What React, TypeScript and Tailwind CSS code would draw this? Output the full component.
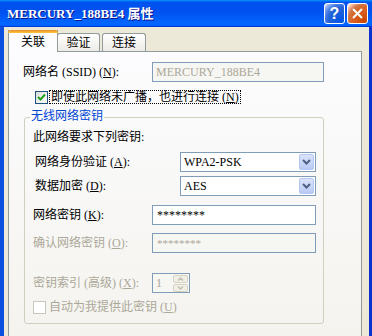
import React from "react";

// Windows XP style "wireless network properties" dialog

function Mn({ c }: { c: string }) {
  return <u className="underline underline-offset-[1px]">{c}</u>;
}

function Chevron({ color }: { color: string }) {
  return (
    <svg width="9" height="6" viewBox="0 0 9 6">
      <path d="M1 1 L4.5 4.5 L8 1" fill="none" stroke={color} strokeWidth="2" />
    </svg>
  );
}

function Select({ value }: { value: string }) {
  return (
    <div className="flex h-[20px] w-[136px] items-center border border-[#7F9DB9] bg-white">
      <span className="flex-1 pl-[3px]">{value}</span>
      <div className="mr-px flex h-[16px] w-[15px] items-center justify-center rounded-[2px] border border-[#B4C7F0] bg-[linear-gradient(180deg,#D9E3FB,#B9CAF3)]">
        <Chevron color="#4D6185" />
      </div>
    </div>
  );
}

function CheckBox({ checked, disabled }: { checked?: boolean; disabled?: boolean }) {
  return (
    <div
      className={
        disabled
          ? "flex h-[13px] w-[13px] items-center justify-center border border-[#CAC8BB] bg-white"
          : "flex h-[13px] w-[13px] items-center justify-center border border-[#1C5180] bg-[linear-gradient(135deg,#DCDCD7,#FFFFFF)]"
      }
    >
      {checked && (
        <svg width="9" height="9" viewBox="0 0 9 9">
          <path d="M1 4 L3.5 6.5 L8 1.5" fill="none" stroke="#21A121" strokeWidth="2" />
        </svg>
      )}
    </div>
  );
}

export default function App() {
  return (
    <div className="h-[336px] w-[372px] overflow-hidden bg-[#ECE9D8] font-[family-name:'Liberation_Serif','Noto_Sans_CJK_SC',serif] text-[12px] leading-[14px] text-black">
      {/* title bar */}
      <div className="flex h-[27px] items-center justify-between bg-[linear-gradient(180deg,#0997ff,#0053ee_8%,#0050ee_40%,#06f_88%,#06f_93%,#005bff_95%,#003dd7_96%,#003dd7)] pl-[7px] pr-[4px]">
        <span className="text-[13px] font-bold text-white [text-shadow:1px_1px_#0F1089]">
          MERCURY_188BE4 属性
        </span>
        <div className="flex gap-[2px]">
          <div className="flex h-[21px] w-[21px] items-center justify-center rounded-[3px] border border-white bg-[radial-gradient(circle_at_90%_90%,#0054E9_0%,#2263D5_55%,#4479E4_70%,#A3BBEC_90%,white_100%)] font-[family-name:'Liberation_Sans',sans-serif] text-[16px] font-bold text-white">
            ?
          </div>
          <div className="flex h-[21px] w-[21px] items-center justify-center rounded-[3px] border border-white bg-[radial-gradient(circle_at_90%_90%,#CC4600_0%,#DC6527_55%,#CD7546_70%,#FFCCB2_90%,white_100%)]">
            <svg width="11" height="11" viewBox="0 0 11 11">
              <path d="M1 1 L10 10 M10 1 L1 10" stroke="white" strokeWidth="2" />
            </svg>
          </div>
        </div>
      </div>

      {/* window body */}
      <div className="h-[309px] border-l-[4px] border-r-[3px] border-l-[#0B4FE0] border-r-[#0A33D0] pt-[3px]">
        {/* tabs */}
        <div className="relative z-10 flex items-end pl-[4px]">
          <div className="flex h-[22px] w-[50px] flex-col border-x border-[#919B9C] bg-[#FCFCFE]">
            <div className="-mx-px h-[3px] rounded-t-[3px] bg-[linear-gradient(180deg,#E68B2C,#FFC73C)]" />
            <div className="flex flex-1 items-center justify-center pb-[2px]">关联</div>
          </div>
          <div className="mb-px -ml-px flex h-[18px] w-[43px] items-center justify-center rounded-t-[3px] border border-b-0 border-[#919B9C] bg-[linear-gradient(180deg,#FFFFFF,#ECEBE6)]">
            验证
          </div>
          <div className="mb-px ml-[2px] flex h-[18px] w-[44px] items-center justify-center rounded-t-[3px] border border-b-0 border-[#919B9C] bg-[linear-gradient(180deg,#FFFFFF,#ECEBE6)]">
            连接
          </div>
        </div>

        {/* tab panel */}
        <div className="-mt-px ml-[4px] h-[300px] w-[354px] border border-[#919B9C] bg-[linear-gradient(180deg,#FCFCFE,#F4F3EE)] pl-[14px] pt-[10px]">
          <div className="flex h-[20px] items-center">
            <span className="w-[129px]">
              网络名 (SSID) (<Mn c="N" />):
            </span>
            <div className="flex h-[20px] w-[172px] items-center border border-[#7F9DB9] bg-[#F6F6F2] pl-[3px] text-[#ACA899]">
              MERCURY_188BE4
            </div>
          </div>

          <div className="mt-[8px] flex h-[14px] items-center pl-[12px]">
            <CheckBox checked />
            <span className="ml-px border border-dotted border-black px-px leading-[12px]">
              即使此网络未广播，也进行连接 (<Mn c="N" />)
            </span>
          </div>

          {/* group box */}
          <div className="relative ml-px mt-[13px] h-[207px] w-[300px] rounded-[3px] border border-[#D0D0BF] pl-[8px] pt-[12px]">
            <span className="absolute left-[5px] top-[-9px] bg-[#FAFAF9] px-px text-[#0046D5]">无线网络密钥</span>

            <div className="h-[14px]">此网络要求下列密钥:</div>

            <div className="mt-[8px] flex h-[20px] items-center">
              <span className="w-[147px] pl-[2px]">
                网络身份验证 (<Mn c="A" />):
              </span>
              <Select value="WPA2-PSK" />
            </div>

            <div className="mt-[4px] flex h-[20px] items-center">
              <span className="w-[147px] pl-[2px]">
                数据加密 (<Mn c="D" />):
              </span>
              <Select value="AES" />
            </div>

            <div className="mt-[9px] flex h-[20px] items-center">
              <span className="w-[119px]">
                网络密钥 (<Mn c="K" />):
              </span>
              <div className="flex h-[20px] w-[164px] items-center border border-[#7F9DB9] bg-white pl-[4px]">
                ********
              </div>
            </div>

            <div className="mt-[8px] flex h-[20px] items-center text-[#ACA899]">
              <span className="w-[119px]">
                确认网络密钥 (<Mn c="O" />):
              </span>
              <div className="flex h-[20px] w-[164px] items-center border border-[#7F9DB9] bg-[#F6F6F2] pl-[4px] text-[11px]">
                ********
              </div>
            </div>

            <div className="mt-[20px] flex h-[20px] items-center text-[#ACA899]">
              <span className="w-[119px]">
                密钥索引 (高级) (<Mn c="X" />):
              </span>
              <div className="flex h-[20px] w-[38px] items-center border border-[#7F9DB9] bg-[#F6F6F2]">
                <span className="flex-1 pl-[3px]">1</span>
                <div className="mr-px flex w-[15px] flex-col gap-px">
                  <div className="flex h-[8px] items-center justify-center rounded-[2px] border border-[#D6D3C5] bg-[#F1EFE4]">
                    <svg width="7" height="4" viewBox="0 0 7 4">
                      <path d="M1 3.5 L3.5 1 L6 3.5" fill="none" stroke="#C3C1B4" strokeWidth="1.5" />
                    </svg>
                  </div>
                  <div className="flex h-[8px] items-center justify-center rounded-[2px] border border-[#D6D3C5] bg-[#F1EFE4]">
                    <svg width="7" height="4" viewBox="0 0 7 4">
                      <path d="M1 0.5 L3.5 3 L6 0.5" fill="none" stroke="#C3C1B4" strokeWidth="1.5" />
                    </svg>
                  </div>
                </div>
              </div>
            </div>

            <div className="mt-[7px] flex h-[14px] items-center text-[#ACA899]">
              <CheckBox disabled />
              <span className="ml-[3px]">
                自动为我提供此密钥 (<Mn c="U" />)
              </span>
            </div>
          </div>
        </div>
      </div>
    </div>
  );
}
